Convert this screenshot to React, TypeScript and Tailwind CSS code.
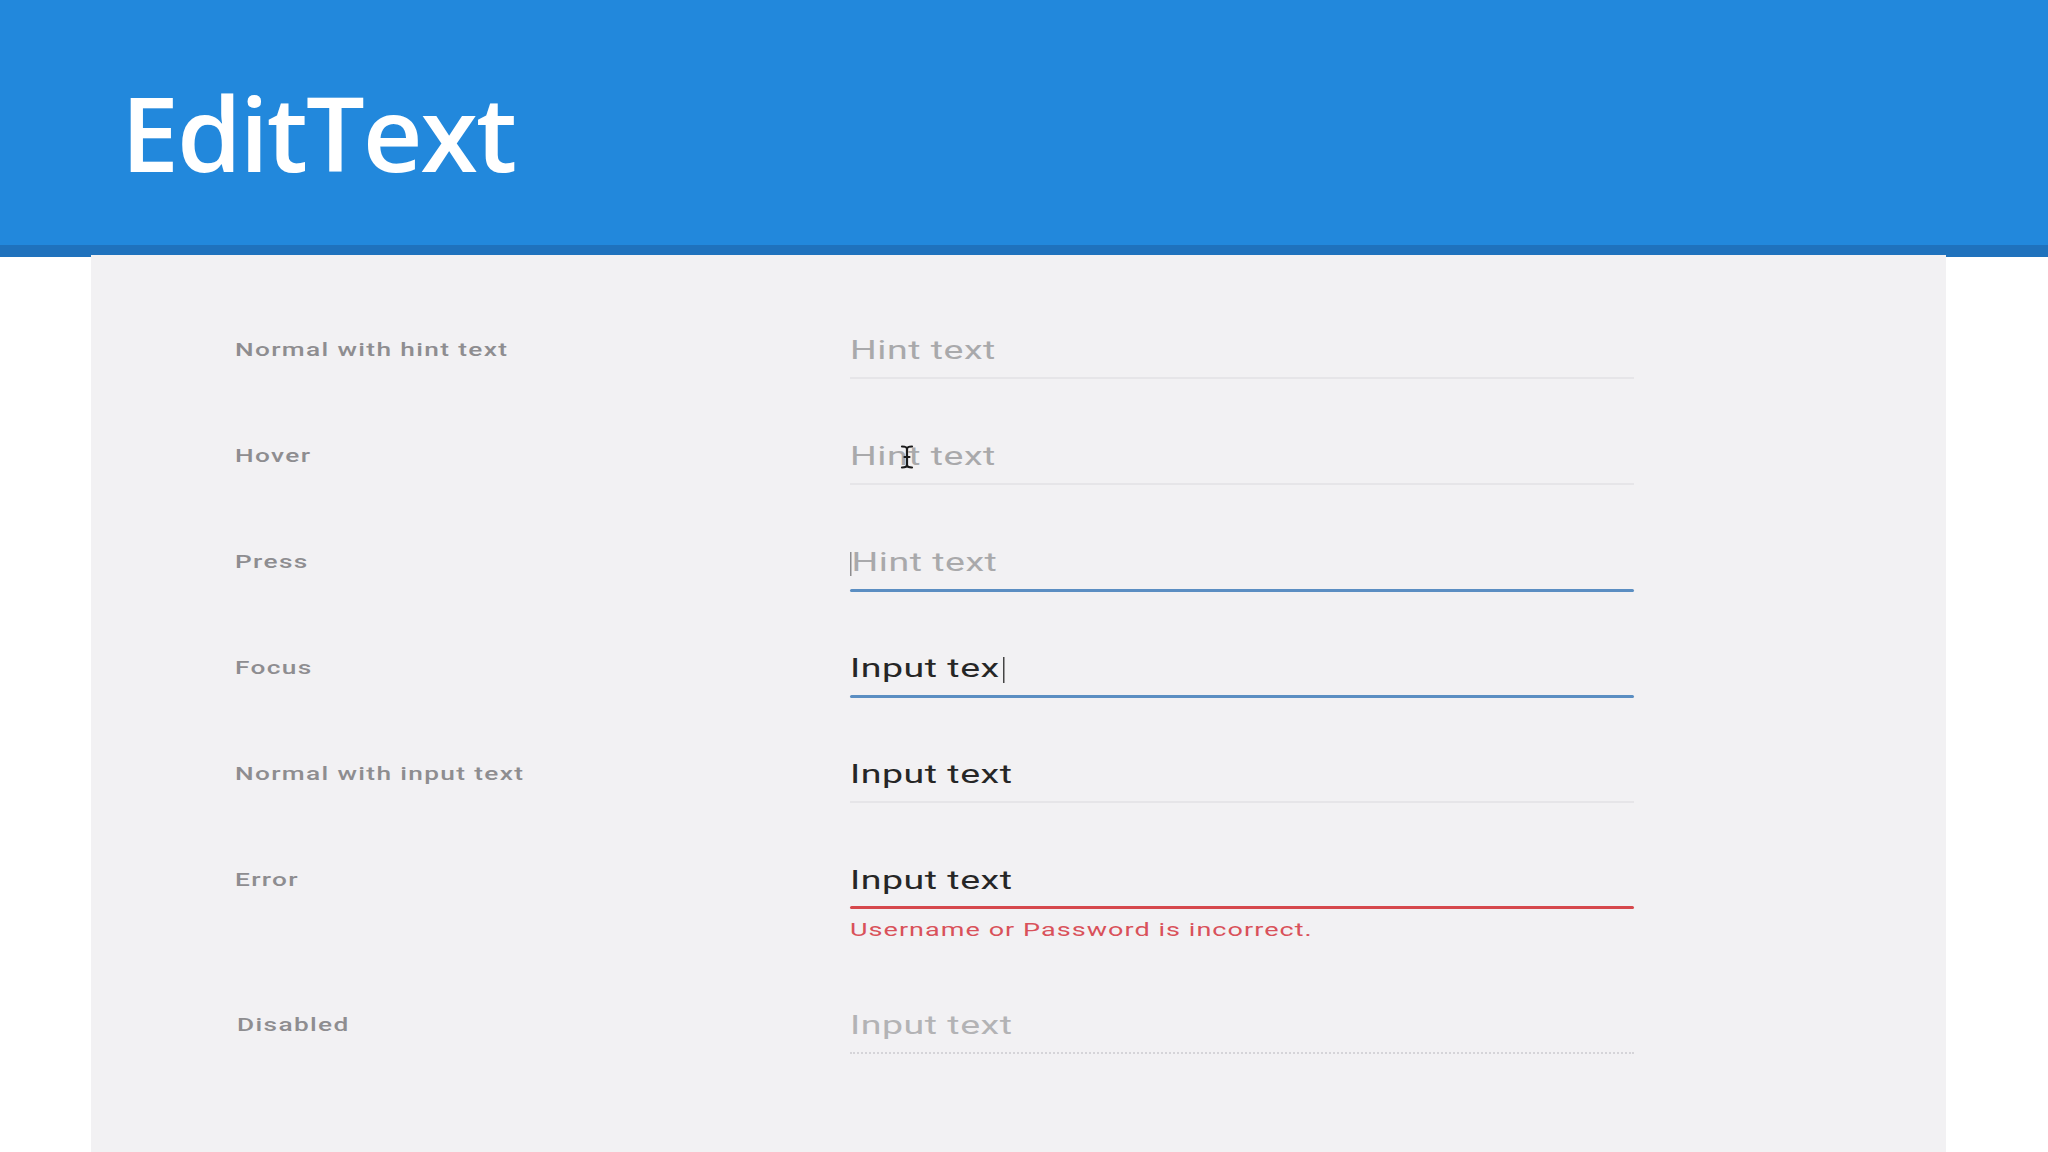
import React from 'react';

type Row = {
  label: string;
  text: string;
  kind: 'hint' | 'hover' | 'press' | 'focus' | 'input' | 'error' | 'disabled';
};

const rows: Row[] = [
  { label: 'Normal with hint text', text: 'Hint text', kind: 'hint' },
  { label: 'Hover', text: 'Hint text', kind: 'hover' },
  { label: 'Press', text: 'Hint text', kind: 'press' },
  { label: 'Focus', text: 'Input tex', kind: 'focus' },
  { label: 'Normal with input text', text: 'Input text', kind: 'input' },
  { label: 'Error', text: 'Input text', kind: 'error' },
  { label: 'Disabled', text: 'Input text', kind: 'disabled' },
];

// the screenshot is stretched wide, so text gets scaled on x
const wide = 'inline-block origin-left scale-x-[1.5] whitespace-nowrap';

function IBeam() {
  return (
    <svg className="absolute left-[50px] top-[6px]" width="14" height="24" viewBox="0 0 14 24">
      <path d="M2 1.5 Q7 1.5 7 4 Q7 1.5 12 1.5 M7 4 V20 M2 22.5 Q7 22.5 7 20 Q7 22.5 12 22.5 M4.5 12 H9.5" fill="none" stroke="#1c1c1c" strokeWidth="2.2" strokeLinecap="round" />
    </svg>
  );
}

function Field({ row }: { row: Row }) {
  const isHint = row.kind === 'hint' || row.kind === 'hover' || row.kind === 'press';
  const color = isHint ? 'text-[#a9a9ab]' : row.kind === 'disabled' ? 'text-[#b3b3b5]' : 'text-[#262626]';

  let line = 'h-[2px] bg-[#e6e5e8] mt-[8px]';
  if (row.kind === 'press' || row.kind === 'focus') line = 'h-[3px] bg-[#5b8ec2] mt-[8px] rounded-full';
  if (row.kind === 'error') line = 'h-[3px] bg-[#d6484c] mt-[7px] rounded-full';
  if (row.kind === 'disabled') line = 'h-0 border-b-2 border-dotted border-[#d5d4d8] mt-[8px]';

  return (
    <div className="w-[784px] pt-[1px]">
      <div className={`relative h-[36px] leading-[36px] text-[25px] tracking-[0.35px] ${color}`}>
        <span className={wide}>
          {row.kind === 'press' && <span className="inline-block w-[1px] h-[24px] bg-[#8d8d8f] align-middle" />}
          {row.text}
          {row.kind === 'focus' && <span className="inline-block w-[1px] h-[26px] bg-[#444] align-middle ml-[2px]" />}
        </span>
        {row.kind === 'hover' && <IBeam />}
      </div>
      <div className={line} />
      {row.kind === 'error' && (
        <div className="mt-[9px] text-[18px] leading-[24px] tracking-[0.7px] text-[#d9515a]">
          <span className={wide}>Username or Password is incorrect.</span>
        </div>
      )}
    </div>
  );
}

export default function App() {
  return (
    <div className="min-h-[1152px] bg-white font-['Roboto','Liberation_Sans',sans-serif]">
      <div className="h-[245px] bg-[#2288dc] pl-[121px] pt-[80px]">
        <h1 className="font-['Open_Sans','Liberation_Sans',sans-serif] font-semibold text-[104px] leading-none tracking-[-2px] text-white">
          EditText
        </h1>
      </div>
      <div className="h-[12px] bg-[#1f72bd]" />
      <div className="ml-[91px] -mt-[2px] w-[1855px] h-[897px] bg-[#f2f1f3] pl-[144px] pt-[77px]">
        {rows.map((row) => (
          <div key={row.label} className={`flex ${row.kind === 'error' ? 'h-[145px]' : 'h-[106px]'}`}>
            <div className="w-[615px]">
              <div className={`h-[36px] leading-[36px] text-[17.5px] font-medium tracking-[0.9px] text-[#8e8d90] ${row.kind === 'disabled' ? 'pl-[2px]' : ''}`}>
                <span className={wide}>{row.label}</span>
              </div>
            </div>
            <Field row={row} />
          </div>
        ))}
      </div>
    </div>
  );
}
